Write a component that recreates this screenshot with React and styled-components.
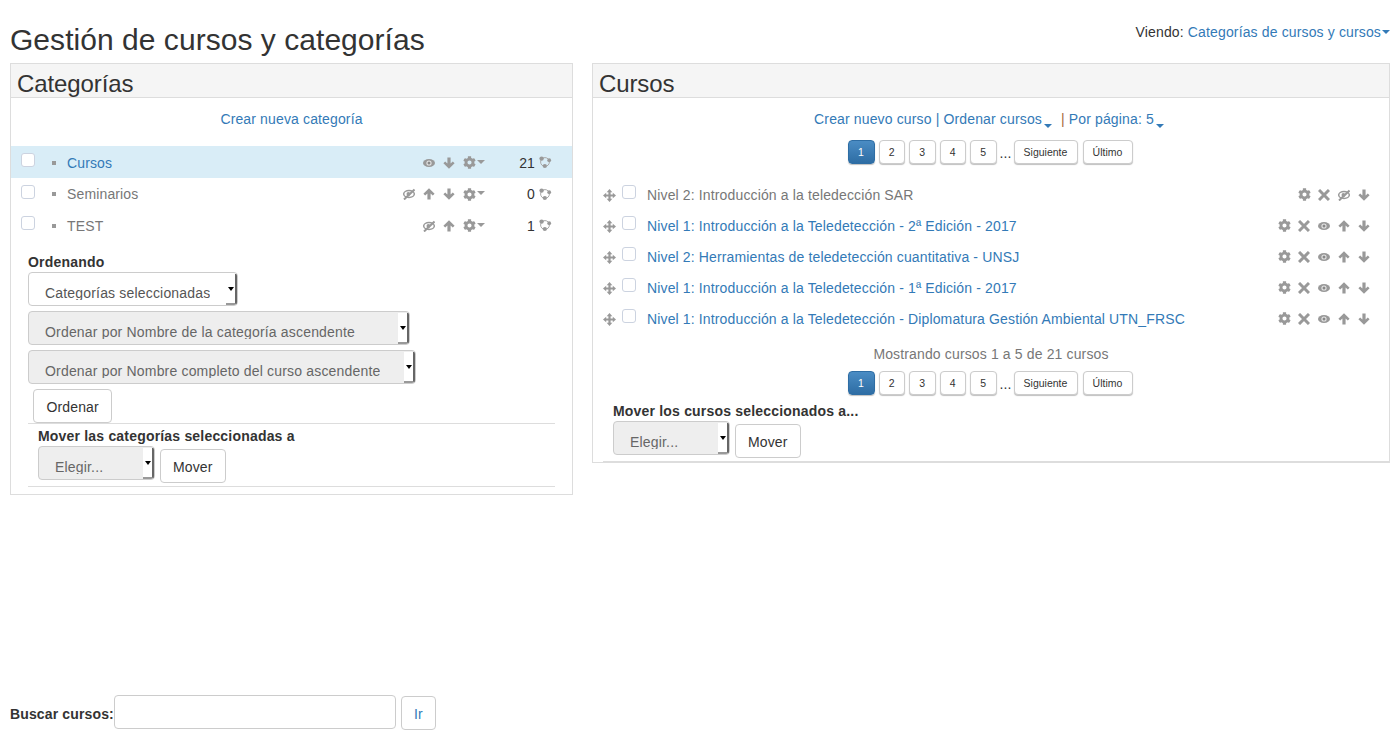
import styled, { createGlobalStyle } from 'styled-components';
import { FaCog } from 'react-icons/fa';

const GlobalStyle = createGlobalStyle`
  html, body {
    margin: 0;
    padding: 0;
    background: #fff;
    color: #333;
    font-family: "Liberation Sans", Arial, sans-serif;
    font-size: 14px;
    line-height: 20px;
    letter-spacing: 0.14px;
  }
`;

const ArrowDown = () => (
  <svg width="12" height="12" viewBox="0 0 12 12" fill="#999">
    <path d="M6 11.8 L0.4 6.2 L2.2 4.4 L4.4 6.6 V0.4 H7.6 V6.6 L9.8 4.4 L11.6 6.2Z" />
  </svg>
);
const ArrowUp = () => (
  <svg width="12" height="12" viewBox="0 0 12 12" fill="#999">
    <path d="M6 0.2 L0.4 5.8 L2.2 7.6 L4.4 5.4 V11.6 H7.6 V5.4 L9.8 7.6 L11.6 5.8Z" />
  </svg>
);
const Cross = () => (
  <svg width="12" height="12" viewBox="0 0 12 12" stroke="#999" strokeWidth="3">
    <path d="M1 1 L11 11 M11 1 L1 11" />
  </svg>
);
const Eye = () => (
  <svg width="12" height="12" viewBox="0 0 12 12">
    <ellipse cx="6" cy="6" rx="6" ry="4" fill="#999" />
    <circle cx="6" cy="6" r="2.6" fill="#e4e4e4" />
    <circle cx="6" cy="6" r="1.5" fill="#888" />
  </svg>
);
const EyeSlash = () => (
  <svg width="12" height="12" viewBox="0 0 12 12">
    <ellipse cx="6" cy="6" rx="5.3" ry="3.4" fill="none" stroke="#999" strokeWidth="1.5" />
    <circle cx="5.4" cy="6" r="1.9" fill="#999" />
    <path d="M1 11.5 L11.5 1.5" stroke="#999" strokeWidth="2" />
  </svg>
);
const Gear = () => <GearGlyph size={13} color="#999" />;
const MoveArrows = () => (
  <svg width="13" height="13" viewBox="0 0 13 13" fill="#999">
    <path d="M6.5 0 L9.3 3.2 H7.6 V5.4 H9.8 V3.7 L13 6.5 L9.8 9.3 V7.6 H7.6 V9.8 H9.3 L6.5 13 L3.7 9.8 H5.4 V7.6 H3.2 V9.3 L0 6.5 L3.2 3.7 V5.4 H5.4 V3.2 H3.7Z" />
  </svg>
);

const ICONS = {
  eye: Eye,
  slash: EyeSlash,
  up: ArrowUp,
  down: ArrowDown,
  gear: Gear,
  del: Cross,
};

const categories = [
  { name: 'Cursos', count: 21, active: true, icons: ['eye', 'down', 'gear'] },
  { name: 'Seminarios', count: 0, icons: ['slash', 'up', 'down', 'gear'] },
  { name: 'TEST', count: 1, icons: ['slash', 'up', 'gear'] },
];

const courses = [
  { name: 'Nivel 2: Introducción a la teledección SAR', hidden: true, icons: ['gear', 'del', 'slash', 'down'] },
  { name: 'Nivel 1: Introducción a la Teledetección - 2ª Edición - 2017', icons: ['gear', 'del', 'eye', 'up', 'down'] },
  { name: 'Nivel 2: Herramientas de teledetección cuantitativa - UNSJ', icons: ['gear', 'del', 'eye', 'up', 'down'] },
  { name: 'Nivel 1: Introducción a la Teledetección - 1ª Edición - 2017', icons: ['gear', 'del', 'eye', 'up', 'down'] },
  { name: 'Nivel 1: Introducción a la Teledetección - Diplomatura Gestión Ambiental UTN_FRSC', icons: ['gear', 'del', 'eye', 'up', 'down'] },
];

function IconRow({ names }) {
  return (
    <Icons>
      {names.map((name, i) => {
        const Icon = ICONS[name];
        return <Icon key={i} />;
      })}
    </Icons>
  );
}

function Pagination({ top }) {
  return (
    <Pager $top={top}>
      <PageButton $active $w={27}>1</PageButton>
      <PageButton $w={26.5}>2</PageButton>
      <PageButton $w={26.5}>3</PageButton>
      <PageButton $w={26.5}>4</PageButton>
      <PageButton $w={26.5}>5</PageButton>
      <Dots>...</Dots>
      <PageButton $w={64}>Siguiente</PageButton>
      <LastButton $w={50}>Último</LastButton>
    </Pager>
  );
}

function FakeSelect({ children, width, disabled }) {
  return (
    <SelectBox $width={width} $disabled={disabled}>
      <SelectText>{children}</SelectText>
      <SelectArrow />
    </SelectBox>
  );
}

function SubcatIcon() {
  return (
    <svg width="13" height="13" viewBox="0 0 13 13" fill="#999">
      <circle cx="6" cy="6" r="4.4" fill="none" stroke="#aaa" strokeWidth="1" />
      <circle cx="2.6" cy="2.6" r="2.2" />
      <circle cx="10.2" cy="4.2" r="1.9" />
      <circle cx="5.8" cy="10" r="2.1" />
    </svg>
  );
}

export default function App() {
  return (
    <Page>
      <GlobalStyle />
      <Header>
        <Title>Gestión de cursos y categorías</Title>
        <Viewing>
          Viendo: <BlueLink>Categorías de cursos y cursos</BlueLink>
          <SmallCaret />
        </Viewing>
      </Header>

      <Columns>
        <LeftPanel>
          <PanelHead>Categorías</PanelHead>
          <ActionLine><BlueLink>Crear nueva categoría</BlueLink></ActionLine>
          <CategoryList>
            {categories.map((cat) => (
              <CategoryRow key={cat.name} $active={cat.active}>
                <Check type="checkbox" />
                <Bullet />
                <CategoryName $active={cat.active}>{cat.name}</CategoryName>
                <IconRow names={cat.icons} />
                <MenuCaret />
                <Count>{cat.count}</Count>
                <SubcatIcon />
              </CategoryRow>
            ))}
          </CategoryList>

          <SortForm>
            <FormLabel>Ordenando</FormLabel>
            <FakeSelect width={210}>Categorías seleccionadas</FakeSelect>
            <FakeSelect width={382} disabled>Ordenar por Nombre de la categoría ascendente</FakeSelect>
            <FakeSelect width={388} disabled>Ordenar por Nombre completo del curso ascendente</FakeSelect>
            <SortButton>Ordenar</SortButton>
          </SortForm>

          <MoveForm>
            <MoveLabel>Mover las categorías seleccionadas a</MoveLabel>
            <MoveLine>
              <FakeSelect width={117} disabled>Elegir...</FakeSelect>
              <Button>Mover</Button>
            </MoveLine>
          </MoveForm>
        </LeftPanel>

        <RightPanel>
          <PanelHead>Cursos</PanelHead>
          <CourseActions>
            <BlueLink>Crear nuevo curso</BlueLink> <Sep>|</Sep> <BlueLink>Ordenar cursos</BlueLink>
            <LowCaret />
            <Sep $dark>|</Sep> <BlueLink>Por página: 5</BlueLink>
            <LowCaret />
          </CourseActions>
          <Pagination top={11} />
          <CourseList>
            {courses.map((course) => (
              <CourseRow key={course.name}>
                <MoveHandle><MoveArrows /></MoveHandle>
                <Check type="checkbox" />
                <CourseName $hidden={course.hidden}>{course.name}</CourseName>
                <IconRow names={course.icons} />
              </CourseRow>
            ))}
          </CourseList>
          <Showing>Mostrando cursos 1 a 5 de 21 cursos</Showing>
          <Pagination top={7} />
          <CourseMove>
            <FormLabel>Mover los cursos seleccionados a...</FormLabel>
            <MoveLine>
              <FakeSelect width={117} disabled>Elegir...</FakeSelect>
              <Button>Mover</Button>
            </MoveLine>
          </CourseMove>
        </RightPanel>
      </Columns>

      <SearchBar>
        <SearchLabel>Buscar cursos:</SearchLabel>
        <SearchInput type="text" />
        <GoButton>Ir</GoButton>
      </SearchBar>
    </Page>
  );
}

const Page = styled.div`
  box-sizing: border-box;
  height: 734px;
  padding: 0 10px 4px;
  display: flex;
  flex-direction: column;
  overflow: hidden;
`;
const Header = styled.header`
  display: flex;
  justify-content: space-between;
  align-items: flex-start;
  height: 63px;
`;
const Title = styled.h1`
  margin: 20px 0 0;
  font-size: 30px;
  line-height: 39px;
  font-weight: 400;
  letter-spacing: 0.04px;
`;
const Viewing = styled.div`
  margin-top: 22px;
  display: flex;
  align-items: center;
  white-space: pre;
`;
const BlueLink = styled.a`
  color: #337ab7;
`;
const SmallCaret = styled.span`
  width: 0;
  height: 0;
  margin-left: 1px;
  border: 4px solid transparent;
  border-top-color: #337ab7;
  border-bottom: 0;
`;
const Columns = styled.main`
  display: flex;
  align-items: flex-start;
  gap: 19px;
`;
const Panel = styled.section`
  box-sizing: border-box;
  border: 1px solid #ddd;
`;
const LeftPanel = styled(Panel)`
  width: 563px;
  height: 432px;
`;
const RightPanel = styled(Panel)`
  width: 798px;
  height: 400px;
`;
const PanelHead = styled.h2`
  margin: 0;
  height: 34px;
  box-sizing: border-box;
  padding: 6px 6px 0;
  background: #f5f5f5;
  border-bottom: 1px solid #ddd;
  font-size: 24px;
  line-height: 27px;
  font-weight: 400;
  letter-spacing: -0.1px;
`;
const ActionLine = styled.div`
  margin-top: 11px;
  height: 20px;
  text-align: center;
`;
const CourseActions = styled(ActionLine)`
  padding-right: 4px;
`;
const Sep = styled.span`
  color: ${(p) => (p.$dark ? '#a56a3a' : '#337ab7')};
  margin-left: ${(p) => (p.$dark ? '9px' : '0')};
`;
const LowCaret = styled.span`
  display: inline-block;
  width: 0;
  height: 0;
  margin-left: 2px;
  vertical-align: -4px;
  border: 4px solid transparent;
  border-top-color: #337ab7;
  border-bottom: 0;
`;
const CategoryList = styled.div`
  margin-top: 17px;
`;
const CategoryRow = styled.div`
  box-sizing: border-box;
  display: flex;
  align-items: center;
  height: 31.5px;
  padding: 2px 20px 0 10px;
  background: ${(p) => (p.$active ? '#d9edf7' : 'transparent')};
`;
const Check = styled.input`
  appearance: none;
  flex: none;
  box-sizing: border-box;
  width: 14px;
  height: 14px;
  margin: 0 0 5px;
  background: #fff;
  border: 1px solid #ccd3e0;
  border-radius: 3px;
`;
const Bullet = styled.span`
  flex: none;
  width: 4px;
  height: 4px;
  margin: 0 11px 0 17px;
  background: #999;
`;
const CategoryName = styled.a`
  flex: 1;
  color: ${(p) => (p.$active ? '#337ab7' : '#777')};
`;
const Icons = styled.span`
  display: flex;
  align-items: center;
  gap: 8px;
`;
const GearGlyph = styled(FaCog)`
  margin: 0 -0.5px;
`;
const MenuCaret = styled.span`
  width: 0;
  height: 0;
  margin: 0 0 2px 2px;
  border: 4px solid transparent;
  border-top-color: #999;
  border-bottom: 0;
`;
const Count = styled.span`
  width: 50px;
  margin-right: 4px;
  text-align: right;
`;
const SortForm = styled.form`
  margin: 11px 17px 0;
  display: flex;
  flex-direction: column;
  align-items: flex-start;
`;
const FormLabel = styled.label`
  font-weight: 700;
  line-height: 20px;
  letter-spacing: 0.19px;
`;
const SelectBox = styled.div`
  flex: none;
  box-sizing: border-box;
  display: flex;
  justify-content: space-between;
  width: ${(p) => p.$width}px;
  height: 34px;
  margin: 0 0 5px;
  background: ${(p) => (p.$disabled ? '#eee' : '#fff')};
  color: ${(p) => (p.$disabled ? '#666' : '#555')};
  border: 1px solid #ccc;
  border-radius: 4px;
  overflow: hidden;
  letter-spacing: 0.18px;
`;
const SelectText = styled.span`
  box-sizing: border-box;
  display: block;
  height: 27px;
  padding: 10px 0 0 16px;
  overflow: hidden;
  white-space: nowrap;
`;
const SelectArrow = styled.span`
  flex: none;
  box-sizing: border-box;
  position: relative;
  width: 11px;
  height: 31px;
  margin-top: 1px;
  background: #fff;
  border-right: 2px solid #666;
  border-bottom: 2px solid #999;
  &::after {
    content: '';
    position: absolute;
    top: 13px;
    left: 2px;
    border: 3px solid transparent;
    border-top: 4px solid #000;
    border-bottom: 0;
  }
`;
const Button = styled.button`
  box-sizing: border-box;
  height: 34px;
  padding: 2px 12.5px 0;
  background: #fff;
  color: #333;
  border: 1px solid #ccc;
  border-radius: 4px;
  font: inherit;
  letter-spacing: inherit;
`;
const SortButton = styled(Button)`
  margin-left: 5px;
`;
const MoveForm = styled.div`
  margin: 0 17px;
  padding: 2px 10px 3px;
  border-top: 1px solid #ddd;
  border-bottom: 1px solid #ddd;
`;
const MoveLabel = styled(FormLabel)`
  display: block;
`;
const MoveLine = styled.div`
  display: flex;
  gap: 5px;
  & > button {
    margin-top: 3px;
    padding: 2px 12px 0;
  }
  & > div {
    margin-bottom: 0;
  }
`;
const Pager = styled.div`
  margin-top: ${(p) => p.$top}px;
  padding-right: 2px;
  display: flex;
  justify-content: center;
  align-items: flex-start;
  gap: 4px;
`;
const PageButton = styled.button`
  box-sizing: border-box;
  width: ${(p) => p.$w}px;
  height: 24px;
  padding: 0;
  background: ${(p) => (p.$active ? 'linear-gradient(#4a8cc4, #2e6da4)' : '#fff')};
  color: ${(p) => (p.$active ? '#fff' : '#333')};
  border: 1px solid ${(p) => (p.$active ? '#2e6da4' : '#ccc')};
  border-radius: 4px;
  box-shadow: 0 1px 1px rgba(0, 0, 0, 0.25);
  font: 10.5px "Liberation Sans", Arial, sans-serif;
`;
const LastButton = styled(PageButton)`
  margin-left: 1px;
`;
const Dots = styled.span`
  width: 9px;
  margin: 3px 0 0 -1px;
  margin-right: 1px;
  line-height: 20px;
`;
const CourseList = styled.div`
  margin-top: 15px;
`;
const CourseRow = styled.div`
  display: flex;
  align-items: center;
  height: 31px;
  padding-right: 19px;
  padding-left: 10px;
`;
const MoveHandle = styled.span`
  display: flex;
  margin: 2px 6px 0 0;
`;
const CourseName = styled.a`
  flex: 1;
  margin-left: 11px;
  color: ${(p) => (p.$hidden ? '#777' : '#337ab7')};
`;
const Showing = styled.div`
  margin-top: 10px;
  text-align: center;
  color: #777;
`;
const CourseMove = styled.div`
  box-sizing: border-box;
  height: 61px;
  margin: 6px 0 0 10px;
  padding-left: 10px;
  border-bottom: 1px solid #ddd;
`;
const SearchBar = styled.form`
  margin-top: auto;
  display: flex;
  align-items: flex-start;
`;
const SearchLabel = styled.label`
  font-weight: 700;
  margin-top: 9px;
`;
const SearchInput = styled.input`
  box-sizing: border-box;
  width: 282px;
  height: 34px;
  background: #fff;
  border: 1px solid #ccc;
  border-radius: 4px;
`;
const GoButton = styled(Button)`
  margin: 1px 0 0 5px;
  padding: 2px 12px 0;
  color: #337ab7;
`;
